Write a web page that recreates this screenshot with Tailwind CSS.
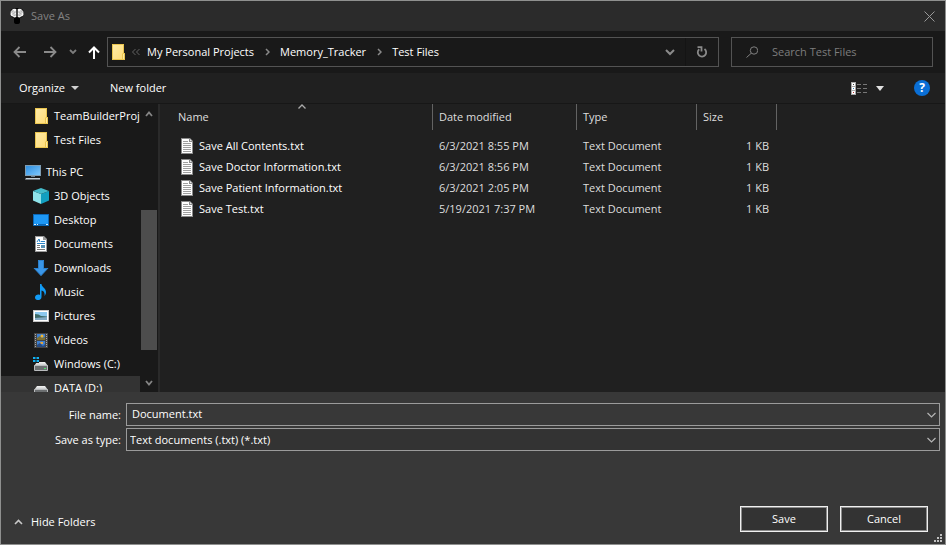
<!DOCTYPE html>
<html lang="en">
<head>
<meta charset="utf-8">
<meta name="viewport" content="width=device-width, initial-scale=1">
<title>Save As</title>
<script src="https://cdn.jsdelivr.net/npm/@tailwindcss/browser@4"></script>
</head>
<body class="bg-[#191919]">
<svg class="absolute size-0" aria-hidden="true">
  <defs>
    <linearGradient id="gold" x1="0" y1="0" x2="1" y2="1"><stop offset="0" stop-color="#ffeba6"/><stop offset="1" stop-color="#ffdc78"/></linearGradient>
    <linearGradient id="sky" x1="0" y1="0" x2="1" y2="1"><stop offset="0" stop-color="#2f8fe0"/><stop offset="1" stop-color="#7cc6fb"/></linearGradient>
    <linearGradient id="drive" x1="0" y1="0" x2="0" y2="1"><stop offset="0" stop-color="#f4f4f4"/><stop offset="1" stop-color="#bfc1c3"/></linearGradient>
  </defs>
  <symbol id="folder" viewBox="0 0 16 16">
    <path d="M2 0H14V9H15V16H2Z" fill="#eac54f"/>
    <path d="M3 1H13V9L12 10V15H3Z" fill="url(#gold)"/>
    <path d="M13 10H14V15H13Z" fill="#ffe9a0"/>
  </symbol>
  <symbol id="file" viewBox="0 0 12 16">
    <path d="M0 0H9L12 3V16H0Z" fill="#8a8a8a"/>
    <path d="M1 1H8V4H11V15H1Z" fill="#fff"/>
    <path d="M9 1L11 3H9Z" fill="#e8e8e8"/>
    <path d="M2 3.500H7M2 5.500H10M2 7.500H10M2 9.500H10M2 11.500H10M2 13.500H10" stroke="#a0a0a0"/>
  </symbol>
  <symbol id="disk" viewBox="0 0 16 16">
    <path d="M4 6H12L15 10H1Z" fill="url(#drive)"/>
    <rect x="1" y="9" width="14" height="6" rx="1" fill="#b9bbbd"/>
    <rect x="2" y="10" width="12" height="4" fill="#6c6f71"/>
    <rect x="11" y="12" width="2" height="1" fill="#4be36a"/>
  </symbol>
</svg>

<div class="flex h-screen min-h-[420px] flex-col overflow-hidden border border-[#8f908f] bg-[#383838] font-['Open_Sans','Noto_Sans',sans-serif] text-[11px] leading-4 text-white">

  <header class="flex h-[30px] shrink-0 items-center bg-[#2b2b2b] pl-2 pr-2.5">
    <svg class="size-4" viewBox="0 0 16 16" aria-hidden="true">
      <path d="M1 5Q1 0 8 0Q15 0 15 5Q15 9 11 10V14Q11 16 8 16Q5 16 5 14V10Q1 9 1 5Z" fill="#000"/>
      <path d="M7.300 1Q4 0 3 2Q1 3 1.500 5.500Q1 8 4 8.500Q5 10 7.300 9ZM8.700 1Q12 0 13 2Q15 3 14.500 5.500Q15 8 12 8.500Q11 10 8.700 9Z" fill="#f5f5f5"/>
      <path d="M4 2V4H2M7 4H5V6H3M5 8V7H7M12 2V4H14M9 4H11V6H13M11 8V7H9" stroke="#8b8b8b" stroke-width=".7" fill="none"/>
    </svg>
    <h1 class="ml-1.5 text-[#838383]">Save As</h1>
    <button aria-label="Close" class="ml-auto">
      <svg class="size-[11px]" viewBox="0 0 11 11" fill="none" stroke="#999" aria-hidden="true"><path d="M.5 .5L10.500 10.500M10.500 .5L.5 10.500"/></svg>
    </button>
  </header>

  <nav class="flex h-[42px] shrink-0 items-center bg-[#191919] pl-3 pr-3">
    <button aria-label="Back"><svg class="size-3.5" viewBox="0 0 14 14" fill="none" stroke="#8a8a8a" stroke-width="1.800" aria-hidden="true"><path d="M13 7H2M6.500 2L1.500 7L6.500 12"/></svg></button>
    <button aria-label="Forward" class="ml-4"><svg class="size-3.5" viewBox="0 0 14 14" fill="none" stroke="#8a8a8a" stroke-width="1.800" aria-hidden="true"><path d="M1 7H12M7.500 2L12.500 7L7.500 12"/></svg></button>
    <button aria-label="Recent locations" class="ml-3"><svg class="h-3 w-2" viewBox="0 0 8 12" fill="none" stroke="#7d7d7d" stroke-width="1.800" aria-hidden="true"><path d="M1 4L4 7L7 4"/></svg></button>
    <button aria-label="Up" class="ml-2.5"><svg class="size-3.5" viewBox="0 0 14 14" fill="none" stroke="#fff" stroke-width="2" aria-hidden="true"><path d="M7 14V3M2 7.500L7 2.500L12 7.500"/></svg></button>

    <div class="ml-1.5 flex h-[30px] flex-1 items-center border border-[#535353]">
      <svg class="ml-0.5 size-4" aria-hidden="true"><use href="#folder"/></svg>
      <svg class="ml-1.5 size-2" viewBox="0 0 8 8" fill="none" stroke="#636363" aria-hidden="true"><path d="M3.500 1L.5 4L3.500 7M7.500 1L4.500 4L7.500 7"/></svg>
      <a href="#" class="ml-[7px]">My Personal Projects</a>
      <svg class="ml-[11px] h-2 w-[5px]" viewBox="0 0 5 8" fill="none" stroke="#8a8a8a" stroke-width="1.500" aria-hidden="true"><path d="M1 1L4 4L1 7"/></svg>
      <a href="#" class="ml-2.5">Memory_Tracker</a>
      <svg class="ml-[11px] h-2 w-[5px]" viewBox="0 0 5 8" fill="none" stroke="#8a8a8a" stroke-width="1.500" aria-hidden="true"><path d="M1 1L4 4L1 7"/></svg>
      <a href="#" class="ml-2.5">Test Files</a>
      <button aria-label="Previous locations" class="ml-auto flex h-full w-8 items-center justify-center border-r border-[#141414]"><svg class="h-2 w-2.5" viewBox="0 0 10 8" fill="none" stroke="#8a8a8a" stroke-width="2" aria-hidden="true"><path d="M1 2L5 6L9 2"/></svg></button>
      <button aria-label="Refresh" class="flex h-full w-8 items-center justify-center"><svg class="size-3" viewBox="0 0 12 12" fill="none" stroke="#8a8a8a" stroke-width="1.800" aria-hidden="true"><path d="M8.500 3A4.200 4.200 0 1 1 3.200 3.200M1.500 1.200H5.500V5.500"/></svg></button>
    </div>

    <label class="ml-3 flex h-[30px] w-[202px] items-center border border-[#535353] pl-3.5">
      <svg class="size-3 shrink-0" viewBox="0 0 12 12" fill="none" stroke="#808080" aria-hidden="true"><circle cx="8" cy="4.500" r="3.700"/><path d="M5.300 7.200L.5 11.500"/></svg>
      <input type="search" aria-label="Search Test Files" placeholder="Search Test Files" class="ml-3.5 w-full min-w-0 bg-transparent outline-none placeholder:text-[#7d7d7d]">
    </label>
  </nav>

  <div class="flex h-[30px] shrink-0 items-center bg-[#202020] pl-[18px] pr-[15px]">
    <button class="flex items-center">Organize<svg class="ml-1.5 h-1 w-2" viewBox="0 0 8 4" fill="#d0d0d0" aria-hidden="true"><path d="M0 0H8L4 4Z"/></svg></button>
    <button class="ml-[31px]">New folder</button>
    <button aria-label="Change your view" class="ml-auto">
      <svg class="h-[13px] w-4" viewBox="0 0 16 13" aria-hidden="true"><path d="M0 0H5V13H0Z" fill="#a9a9a9"/><path d="M1 1H4V4H1ZM1 5H4V8H1ZM1 9H4V12H1Z" fill="#fff"/><path d="M2 2H3V3H2Z" fill="#444"/><path d="M2 6H3V7H2Z" fill="#347bb8"/><path d="M2 10H3V11H2Z" fill="#b33"/><path d="M6 2.500H10M12 2.500H16M6 6.500H10M12 6.500H16M6 10.500H10M12 10.500H16" stroke="#777"/></svg>
    </button>
    <button aria-label="View options" class="ml-[9px]"><svg class="h-[5px] w-2" viewBox="0 0 8 5" fill="#e0e0e0" aria-hidden="true"><path d="M0 0H8L4 5Z"/></svg></button>
    <button aria-label="Help" class="ml-[30px] flex size-4 items-center justify-center rounded-full bg-[#0a6fd6] text-[12px] font-bold leading-4">?</button>
  </div>

  <main class="flex min-h-0 flex-1 border-t border-[#171717] bg-[#202020]">
    <aside class="flex shrink-0 border-r-2 border-[#2a2a2a] bg-[#191919]">
      <ul class="w-[139px] overflow-hidden whitespace-nowrap [&_a]:flex [&_a]:h-6 [&_a]:items-center [&_a]:gap-[5px] [&_a]:pl-8 [&_svg]:size-4 [&_svg]:shrink-0">
        <li><a href="#"><svg aria-hidden="true"><use href="#folder"/></svg>TeamBuilderProj</a></li>
        <li><a href="#"><svg aria-hidden="true"><use href="#folder"/></svg>Test Files</a></li>
        <li class="-ml-2 mt-2"><a href="#"><svg viewBox="0 0 16 16" aria-hidden="true"><path d="M0 1H16V12H0Z" fill="#7f9db3"/><path d="M1 2H15V11H1Z" fill="url(#sky)"/><path d="M6 12H10V13H6Z" fill="#6d8290"/><path d="M1 14H15V15.500H0Z" fill="#c3d0d9"/></svg>This PC</a></li>
        <li><a href="#"><svg viewBox="0 0 16 16" aria-hidden="true"><path d="M0 3L8 6V16L0 12.500Z" fill="#8fe3ea"/><path d="M16 3L8 6V16L16 12.500Z" fill="#129fc0"/><path d="M8 0L16 3L8 6L0 3Z" fill="#45bccb"/></svg>3D Objects</a></li>
        <li><a href="#"><svg viewBox="0 0 16 16" aria-hidden="true"><path d="M0 2H16V14H0Z" fill="#0b67b5"/><path d="M1 3H15V12H1Z" fill="#1e98f5"/><path d="M1 12.500H3M4 12.500H5M13 12.500H15" stroke="#d9efff"/></svg>Desktop</a></li>
        <li><a href="#"><svg viewBox="0 0 16 16" aria-hidden="true"><path d="M2 0H11L14 3V16H2Z" fill="#9a9a9a"/><path d="M3 1H10V4H13V15H3Z" fill="#fff"/><path d="M4 6L6 3L7 6M8 5.500H12M4 7.500H12" stroke="#2b83c6" fill="none"/><path d="M4 9.500H7M4 11.500H7M4 13.500H12" stroke="#777"/><path d="M8 9H12V12H8Z" fill="#5791b5"/></svg>Documents</a></li>
        <li><a href="#"><svg viewBox="0 0 16 16" aria-hidden="true"><path d="M5 0H11V8H15.500L8 16L.5 8H5Z" fill="#3a96e8"/><path d="M5.500 .5H10.500V8.500H14.500L8 15.300L1.500 8.500H5.500Z" fill="none" stroke="#2b7fca"/></svg>Downloads</a></li>
        <li><a href="#"><svg viewBox="0 0 16 16" aria-hidden="true"><path d="M7 0H8.500C8.500 3 13 4 13 8C13 10 12 11.500 11.500 12C12 9 11 7 8.500 6.500V13C8.500 17 2 17 2 13.500C2 11 5 10 7 11Z" fill="#119bf5"/></svg>Music</a></li>
        <li><a href="#"><svg viewBox="0 0 16 16" aria-hidden="true"><path d="M0 2H16V14H0Z" fill="#c5c5c5"/><path d="M1 3H15V13H1Z" fill="#fff"/><path d="M2 4H14V12H2Z" fill="#8cc8ee"/><path d="M2 6Q6 6 8 8L14 8.500V12H2Z" fill="#3d6a67"/><path d="M2 10L14 9V12H2Z" fill="#83aac4"/></svg>Pictures</a></li>
        <li><a href="#"><svg viewBox="0 0 16 16" aria-hidden="true"><path d="M1 1H15V16H1Z" fill="#454545"/><path d="M2.500 2V16M13.500 2V16" stroke="#aaa" stroke-dasharray="1 1"/><path d="M4 2H12V8H4ZM4 9H12V15H4Z" fill="#3d7fd0"/><path d="M4 6L7 4L9 6L12 5V8H4Z" fill="#7b7036"/><circle cx="9" cy="4" r="1.500" fill="#f5b62c"/><path d="M4 13L7 11L10 14L12 12V15H4Z" fill="#294b81"/><path d="M7 10H10V12H8Z" fill="#e3a33b"/></svg>Videos</a></li>
        <li><a href="#"><svg viewBox="0 0 16 16" aria-hidden="true"><use href="#disk"/><path d="M0 0H6V7H0Z" fill="#191919"/><path d="M0 1H2.500V3H0ZM3.500 1H6V3H3.500ZM0 4H2.500V6H0ZM3.500 4H6V6H3.500Z" fill="#12b1f2"/></svg>Windows (C:)</a></li>
        <li class="bg-[#333]"><a href="#"><svg aria-hidden="true"><use href="#disk"/></svg>DATA (D:)</a></li>
      </ul>
      <div class="flex w-[18px] flex-col items-center px-px" aria-hidden="true">
        <svg class="mt-[7px] h-1.5 w-2" viewBox="0 0 8 6" fill="none" stroke="#858585" stroke-width="1.800"><path d="M1 5L4 1.500L7 5"/></svg>
        <div class="my-[5px] flex w-full flex-1 flex-col">
          <div class="grow-[88]"></div><div class="grow-[141] bg-[#4d4d4d]"></div><div class="grow-[25]"></div>
        </div>
        <svg class="mb-1.5 h-1.5 w-2" viewBox="0 0 8 6" fill="none" stroke="#858585" stroke-width="1.800"><path d="M1 1L4 4.500L7 1"/></svg>
      </div>
    </aside>

    <section class="min-w-0 flex-1 overflow-hidden" aria-label="Files">
      <table class="w-[617px] table-fixed border-separate border-spacing-0 text-[#dedede] [&_td]:h-[21px] [&_td]:p-0 [&_td]:pl-1.5 [&_th]:h-[26px] [&_th]:border-r [&_th]:border-[#636363] [&_th]:p-0 [&_th]:pl-1.5 [&_th]:text-left [&_th]:font-normal">
        <thead>
          <tr>
            <th scope="col" class="relative w-[273px]"><span class="pl-3">Name</span><svg class="absolute left-[138px] top-0 h-[5px] w-2" viewBox="0 0 8 5" fill="none" stroke="#aaa" stroke-width="1.300" aria-hidden="true"><path d="M.5 4.500L4 1L7.500 4.500"/></svg></th>
            <th scope="col" class="w-[144px]">Date modified</th>
            <th scope="col" class="w-[120px]">Type</th>
            <th scope="col" class="w-[80px]">Size</th>
          </tr>
        </thead>
        <tbody class="before:block before:h-[5px]">
          <tr><td><div class="flex items-center gap-1.5 pl-[15px] text-white"><svg class="h-4 w-3" aria-hidden="true"><use href="#file"/></svg>Save All Contents.txt</div></td><td>6/3/2021 8:55 PM</td><td>Text Document</td><td><div class="pr-2 text-right">1 KB</div></td></tr>
          <tr><td><div class="flex items-center gap-1.5 pl-[15px] text-white"><svg class="h-4 w-3" aria-hidden="true"><use href="#file"/></svg>Save Doctor Information.txt</div></td><td>6/3/2021 8:56 PM</td><td>Text Document</td><td><div class="pr-2 text-right">1 KB</div></td></tr>
          <tr><td><div class="flex items-center gap-1.5 pl-[15px] text-white"><svg class="h-4 w-3" aria-hidden="true"><use href="#file"/></svg>Save Patient Information.txt</div></td><td>6/3/2021 2:05 PM</td><td>Text Document</td><td><div class="pr-2 text-right">1 KB</div></td></tr>
          <tr><td><div class="flex items-center gap-1.5 pl-[15px] text-white"><svg class="h-4 w-3" aria-hidden="true"><use href="#file"/></svg>Save Test.txt</div></td><td>5/19/2021 7:37 PM</td><td>Text Document</td><td><div class="pr-2 text-right">1 KB</div></td></tr>
        </tbody>
      </table>
    </section>
  </main>

  <footer class="relative flex h-[152px] shrink-0 flex-col pt-[11px]">
    <form class="grid grid-cols-[120px_1fr] items-center gap-x-[5px] gap-y-0.5 pr-[5px]">
      <label for="name" class="text-right">File name:</label>
      <div class="relative">
        <input id="name" value="Document.txt" class="block h-[23px] w-full border border-[#9b9b9b] bg-[#383838] pb-0.5 pl-[5px] outline-none">
        <svg class="pointer-events-none absolute right-1 top-[9px] h-1.5 w-[9px]" viewBox="0 0 9 6" fill="none" stroke="#b5b5b5" stroke-width="1.200" aria-hidden="true"><path d="M.5 1L4.500 5L8.500 1"/></svg>
      </div>
      <label for="type" class="text-right">Save as type:</label>
      <div class="relative">
        <select id="type" class="block h-[23px] w-full appearance-none border border-[#9b9b9b] bg-[#333] pl-[3px] outline-none"><option>Text documents (.txt) (*.txt)</option></select>
        <svg class="pointer-events-none absolute right-1 top-[9px] h-1.5 w-[9px]" viewBox="0 0 9 6" fill="none" stroke="#b5b5b5" stroke-width="1.200" aria-hidden="true"><path d="M.5 1L4.500 5L8.500 1"/></svg>
      </div>
    </form>
    <div class="mb-3 mt-auto flex items-end pl-[13px] pr-[17px]">
      <button class="flex h-5 items-center"><svg class="mr-2 h-2 w-[9px]" viewBox="0 0 9 8" fill="none" stroke="#c8c8c8" stroke-width="1.600" aria-hidden="true"><path d="M1 6L4.500 2.500L8 6"/></svg>Hide Folders</button>
      <button class="ml-auto h-[26px] w-[88px] border border-[#f0f0f0] bg-[#333] shadow-[inset_0_0_0_1px_#8c8c8c]">Save</button>
      <button class="ml-3 h-[26px] w-[88px] border border-[#f0f0f0] bg-[#333] shadow-[inset_0_0_0_1px_#8c8c8c]">Cancel</button>
    </div>
    <svg class="absolute bottom-0.5 right-[3px] size-2" viewBox="0 0 8 8" fill="#c0c0c0" aria-hidden="true"><path d="M6 0H8V2H6ZM3 3H5V5H3ZM6 3H8V5H6ZM0 6H2V8H0ZM3 6H5V8H3ZM6 6H8V8H6Z"/></svg>
  </footer>
</div>
</body>
</html>
